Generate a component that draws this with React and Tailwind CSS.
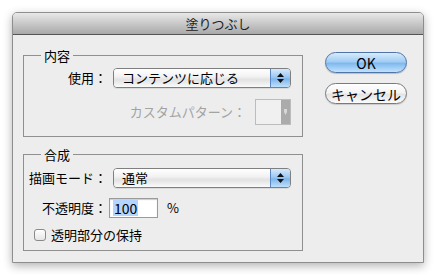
const font = "font-['Noto_Sans_CJK_JP','Noto_Sans',sans-serif]"

function Stepper() {
  return (
    <div className="w-[20px] h-full flex flex-col items-center justify-center gap-[2px] border-l border-[#5b86c4] bg-[linear-gradient(to_bottom,#d6e9fc_0%,#9cc8f2_45%,#7db5ec_55%,#bfe0fd_100%)]">
      <svg width="7" height="4" viewBox="0 0 7 4"><path d="M3.5 0L7 4H0z" fill="#111" /></svg>
      <svg width="7" height="4" viewBox="0 0 7 4"><path d="M0 0h7L3.5 4z" fill="#111" /></svg>
    </div>
  )
}

function Select({ value }) {
  return (
    <div className="ml-[6px] w-[178px] h-[20px] flex rounded-[4px] border border-[#7f7f7f] overflow-hidden shadow-[0_1px_0_rgba(0,0,0,0.08)]">
      <div className="flex-1 flex items-center pl-[8px] text-[13px] leading-[18px] text-black bg-[linear-gradient(to_bottom,#ffffff_0%,#f3f3f3_40%,#e2e2e2_60%,#fafafa_100%)]">
        {value}
      </div>
      <Stepper />
    </div>
  )
}

export default function App() {
  return (
    <div className={`w-[436px] h-[275px] bg-white pt-[12px] pl-[12px] ${font}`}>
      <div className="w-[412px] h-[251px] flex flex-col border border-[#8e8e8e] rounded-t-[5px] bg-[#ededed] shadow-[0_3px_10px_rgba(0,0,0,0.3)]">
        <div className="h-[22px] shrink-0 rounded-t-[4px] border-b border-[#555] bg-[linear-gradient(to_bottom,#e8e8e8,#a9a9a9)] text-center text-[13px] leading-[21px] text-[#1e1e1e]">
          塗りつぶし
        </div>

        <div className="flex pl-[10px]">
          <div className="w-[280px]">
            <div className="relative mt-[20px] h-[82px] border border-[#8f8f8f] pt-[12px]">
              <span className="absolute -top-[8px] left-[17px] px-[3px] bg-[#ededed] text-[13px] leading-[15px] text-black">内容</span>
              <div className="flex items-center h-[20px]">
                <div className="w-[83px] text-right text-[13px] leading-[16px] text-black">使用：</div>
                <Select value="コンテンツに応じる" />
              </div>
              <div className="flex items-center h-[26px] mt-[11px]">
                <div className="w-[222px] text-right text-[13px] leading-[16px] text-[#a3a3a3]">カスタムパターン：</div>
                <div className="ml-[9px] w-[36px] h-[26px] flex border border-[#bcbcbc] bg-[#f0f0f0]">
                  <div className="flex-1" />
                  <div className="w-[9px] flex items-center justify-center bg-[#ababab]">
                    <svg width="3" height="6" viewBox="0 0 3 6"><path d="M0 0h3v3L1.5 6 0 3z" fill="#d8d8d8" /></svg>
                  </div>
                </div>
              </div>
            </div>

            <div className="relative mt-[17px] h-[97px] border border-[#8f8f8f] pt-[13px]">
              <span className="absolute -top-[8px] left-[17px] px-[3px] bg-[#ededed] text-[13px] leading-[15px] text-black">合成</span>
              <div className="flex items-center h-[20px]">
                <div className="w-[83px] text-right text-[13px] leading-[16px] text-black">描画モード：</div>
                <Select value="通常" />
              </div>
              <div className="flex items-center h-[20px] mt-[10px]">
                <div className="w-[83px] text-right text-[13px] leading-[16px] text-black">不透明度：</div>
                <div className="ml-[2px] w-[49px] h-[20px] flex items-center pl-[3px] border border-[#9a9a9a] bg-white shadow-[inset_0_1px_1px_rgba(0,0,0,0.2)]">
                  <span className="bg-[#b4d5fe] px-[1px] text-[14px] leading-[16px] text-black">100</span>
                </div>
                <span className="ml-[9px] text-[13px] leading-[16px] text-black">%</span>
              </div>
              <div className="flex items-center h-[12px] mt-[11px] pl-[10px]">
                <div className="w-[12px] h-[12px] rounded-[3px] border border-[#8a8a8a] bg-[linear-gradient(to_bottom,#ffffff,#e6e6e6)]" />
                <span className="ml-[5px] text-[13px] leading-[16px] text-black">透明部分の保持</span>
              </div>
            </div>
          </div>

          <div className="ml-[22px] pt-[17px] flex flex-col">
            <button className="w-[82px] h-[21px] rounded-full border border-[#4f74a8] bg-[linear-gradient(to_bottom,#d7ebfc_0%,#a3cdf4_45%,#80b9ee_55%,#c2e2fd_100%)] text-[14px] leading-[18px] text-black shadow-[0_1px_1px_rgba(0,0,0,0.2)]">
              OK
            </button>
            <button className="mt-[10px] w-[82px] h-[21px] rounded-full border border-[#7a7a7a] bg-[linear-gradient(to_bottom,#ffffff_0%,#f4f4f4_45%,#e4e4e4_55%,#fbfbfb_100%)] text-[14px] leading-[18px] text-black shadow-[0_1px_1px_rgba(0,0,0,0.15)]">
              キャンセル
            </button>
          </div>
        </div>
      </div>
    </div>
  )
}
